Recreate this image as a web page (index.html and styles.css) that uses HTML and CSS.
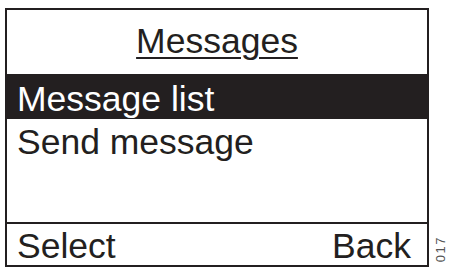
FILE: index.html
```html
<!DOCTYPE html>
<html>
<head>
<meta charset="utf-8">
<link rel="stylesheet" href="styles.css">
</head>
<body>
<div class="page">
  <div class="screen">
    <div class="title"><span class="title-text">Messages</span></div>
    <div class="menu">
      <div class="item item-selected">Message list</div>
      <div class="item">Send message</div>
    </div>
    <div class="footer">
      <span>Select</span>
      <span>Back</span>
    </div>
  </div>
  <div class="fig-label">017</div>
</div>
</body>
</html>
```
FILE: styles.css
```css
html, body {
  margin: 0;
  padding: 0;
  background: #ffffff;
}

.page {
  display: flex;
  align-items: flex-end;
  padding: 8px 0 0 5px;
  font-family: "Liberation Sans", Arial, sans-serif;
  color: #231f20;
}

.screen {
  box-sizing: border-box;
  width: 424px;
  height: 259px;
  border: 2px solid #231f20;
  display: flex;
  flex-direction: column;
  font-size: 35.5px;
  line-height: 39px;
}

.title {
  box-sizing: border-box;
  height: 64px;
  padding-top: 12px;
  text-align: center;
  flex: none;
}

.title-text {
  text-decoration: underline;
  text-decoration-thickness: 2px;
  text-underline-offset: 4px;
}

.menu {
  flex: 1;
}

.item {
  box-sizing: border-box;
  height: 45px;
  padding: 4px 0 0 10px;
  white-space: nowrap;
}

.item-selected {
  padding-top: 6px;
  background: #231f20;
  color: #ffffff;
}

.footer {
  box-sizing: border-box;
  flex: none;
  height: 43px;
  border-top: 2px solid #231f20;
  display: flex;
  justify-content: space-between;
  padding: 3px 16px 0 10px;
}

.fig-label {
  writing-mode: vertical-rl;
  transform: rotate(180deg);
  font-size: 13px;
  line-height: 12px;
  letter-spacing: 1.5px;
  color: #555555;
  margin: 0 0 5px 6px;
}
```
